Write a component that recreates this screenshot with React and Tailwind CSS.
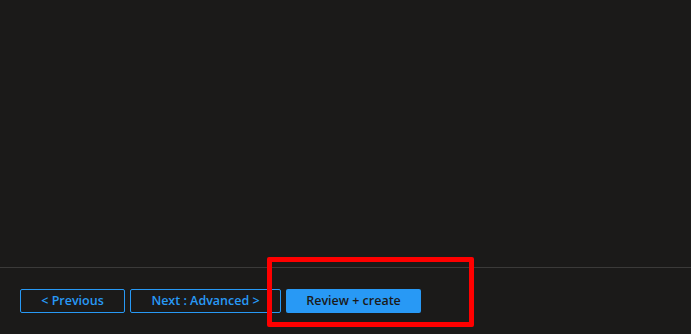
import React from 'react';

const App = () => {
  return (
    <div
      className="relative w-[691px] h-[334px] bg-[#1b1a19] flex flex-col overflow-hidden"
      style={{ fontFamily: '"Open Sans", "Noto Sans", sans-serif' }}
    >
      {/* Main content area (empty) */}
      <div className="h-[267px] shrink-0" />

      {/* Footer */}
      <div className="flex-1 border-t border-[#3b3a39] pt-[21px] pl-[20px]">
        <div className="flex items-center gap-[5px]">
          <button className="w-[105px] h-[24px] border border-[#2899f5] rounded-[2px] text-[#2899f5] text-[12.5px] font-semibold leading-none flex items-center justify-center">
            &lt; Previous
          </button>
          <button className="w-[151px] h-[24px] border border-[#2899f5] rounded-[2px] text-[#2899f5] text-[12.5px] font-semibold leading-none flex items-center justify-center">
            Next : Advanced &gt;
          </button>
          <button className="w-[135px] h-[24px] bg-[#2899f5] rounded-[2px] text-[#1b1a19] text-[12.5px] font-semibold leading-none flex items-center justify-center">
            Review + create
          </button>
        </div>
      </div>

      {/* Annotation highlight */}
      <div className="absolute left-[267px] top-[257px] w-[207px] h-[70px] border-[5px] border-[#ff0000] rounded-[2px]" />
    </div>
  );
};

export default App;
